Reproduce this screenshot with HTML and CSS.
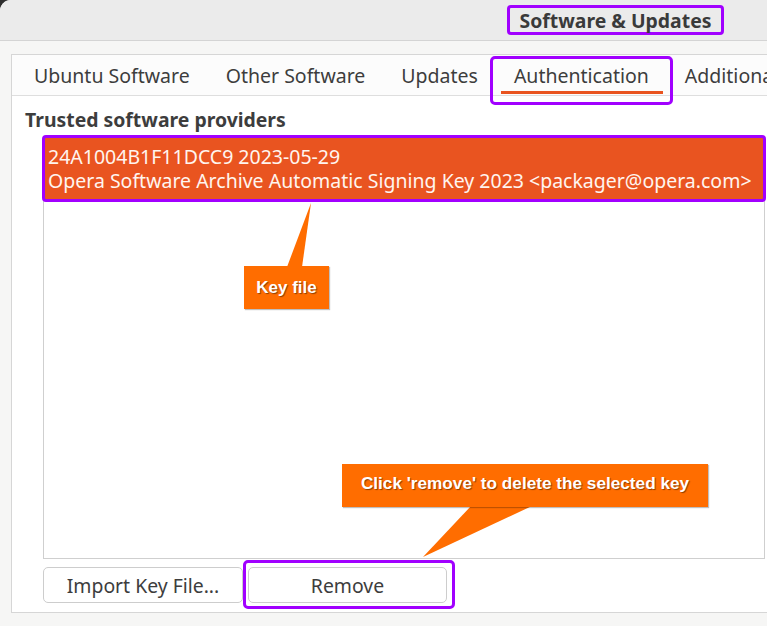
FILE: index.html
```html
<!DOCTYPE html>
<html lang="en">
<head>
<meta charset="utf-8">
<title>Software &amp; Updates</title>
<link rel="stylesheet" href="styles.css">
</head>
<body>
<div class="window">
  <header class="titlebar">
    <span class="title">Software &amp; Updates</span>
  </header>
  <main class="body">
    <section class="notebook">
      <nav class="tabs">
        <span class="tab">Ubuntu Software</span>
        <span class="tab">Other Software</span>
        <span class="tab">Updates</span>
        <span class="tab active">Authentication</span>
        <span class="tab">Additional Drivers</span>
      </nav>
      <div class="page">
        <div class="label">Trusted software providers</div>
        <div class="keylist">
          <div class="keyrow selected">
            <div>24A1004B1F11DCC9 2023-05-29</div>
            <div>Opera Software Archive Automatic Signing Key 2023 &lt;packager@opera.com&gt;</div>
          </div>
        </div>
        <div class="buttons">
          <button class="btn">Import Key File...</button>
          <button class="btn marked">Remove</button>
        </div>
      </div>
    </section>
  </main>
</div>

<svg class="tails" width="767" height="626" viewBox="0 0 767 626" aria-hidden="true">
  <polygon points="287,267 302,267 311,203" fill="#ff6d00"/>
  <polygon points="471,506 532,506 423,557" fill="#ff6d00"/>
</svg>
<div class="callout callout-key">Key file</div>
<div class="callout callout-remove">Click 'remove' to delete the selected key</div>
</body>
</html>
```

FILE: styles.css
```css
html, body {
  margin: 0;
  padding: 0;
}
body {
  width: 767px;
  height: 626px;
  overflow: hidden;
  background: #2e2e2e;
  position: relative;
  font-family: "Noto Sans", "Open Sans", sans-serif;
  color: #3d3d3d;
}
.window {
  height: 626px;
  width: 800px;
  background: #f6f6f5;
  border-top-left-radius: 11px;
  overflow: hidden;
}
.titlebar {
  height: 40px;
  background: #ebebeb;
  border-bottom: 1px solid #d4d4d4;
  display: flex;
  align-items: center;
  padding-left: 507px;
}
.title {
  box-sizing: border-box;
  height: 30px;
  width: 217px;
  border: 3px solid #a100ff;
  border-radius: 4px;
  display: flex;
  align-items: center;
  justify-content: center;
  font-weight: 700;
  font-size: 19.4px;
  color: #3a3a3a;
  white-space: nowrap;
}
.body {
  padding: 13px 0 0 11px;
}
.notebook {
  border: 1px solid #d6d6d6;
  border-right: none;
  background: #ffffff;
}
.tabs {
  height: 40px;
  display: flex;
  align-items: stretch;
  padding-left: 4px;
  border-bottom: 1px solid #dedede;
  background: #fcfcfc;
  white-space: nowrap;
}
.tab {
  position: relative;
  display: flex;
  align-items: center;
  padding: 0 18px;
  font-size: 19.5px;
}
.tab.active::before {
  content: "";
  position: absolute;
  left: 5px;
  right: 4px;
  bottom: 1px;
  height: 3px;
  background: #e95420;
}
.tab.active::after {
  content: "";
  position: absolute;
  left: -6px;
  right: -6px;
  top: 1px;
  bottom: -10px;
  border: 3px solid #a100ff;
  border-radius: 5px;
}
.page {
  padding: 12px 0 9px 13px;
}
.label {
  font-weight: 700;
  font-size: 19.4px;
  line-height: 24px;
  margin-bottom: 5px;
  white-space: nowrap;
}
.keylist {
  margin-left: 18px;
  width: 720px;
  height: 420px;
  border: 1px solid #cfcfcf;
  background: #fff;
}
.keyrow {
  position: relative;
  padding: 7px 4px;
  font-size: 19.5px;
  line-height: 24px;
  white-space: nowrap;
}
.keyrow.selected {
  background: #e95420;
  color: #fff5ef;
}
.keyrow.selected::after {
  content: "";
  position: absolute;
  left: -2px;
  right: -2px;
  top: -3px;
  bottom: -2px;
  border: 3px solid #a100ff;
  border-radius: 4px;
}
.buttons {
  margin: 8px 0 0 18px;
  display: flex;
  gap: 5px;
}
.btn {
  position: relative;
  width: 200px;
  height: 36px;
  background: #ffffff;
  border: 1px solid #cdcdcd;
  border-radius: 5px;
  font-family: "Noto Sans", "Open Sans", sans-serif;
  font-size: 19.4px;
  color: #3d3d3d;
  padding: 0;
}
.btn.marked {
  width: 199px;
}
.btn.marked::after {
  content: "";
  position: absolute;
  left: -6px;
  right: -9px;
  top: -8px;
  bottom: -7px;
  border: 3px solid #a100ff;
  border-radius: 5px;
}
.tails {
  position: absolute;
  left: 0;
  top: 0;
  pointer-events: none;
}
.callout {
  position: absolute;
  box-sizing: border-box;
  background: #ff6d00;
  color: #ffffff;
  font-family: "Liberation Sans", Arial, sans-serif;
  font-weight: 700;
  font-size: 17.2px;
  display: flex;
  align-items: center;
  justify-content: center;
  text-shadow: 1px 1px 1px rgba(0, 0, 0, 0.45);
  box-shadow: 1px 1px 1px rgba(0, 0, 0, 0.25);
  white-space: nowrap;
}
.callout-key {
  left: 244px;
  top: 266px;
  width: 85px;
  height: 43px;
  font-size: 17px;
}
.callout-remove {
  left: 342px;
  top: 464px;
  width: 366px;
  height: 43px;
  padding-bottom: 4px;
}
```
